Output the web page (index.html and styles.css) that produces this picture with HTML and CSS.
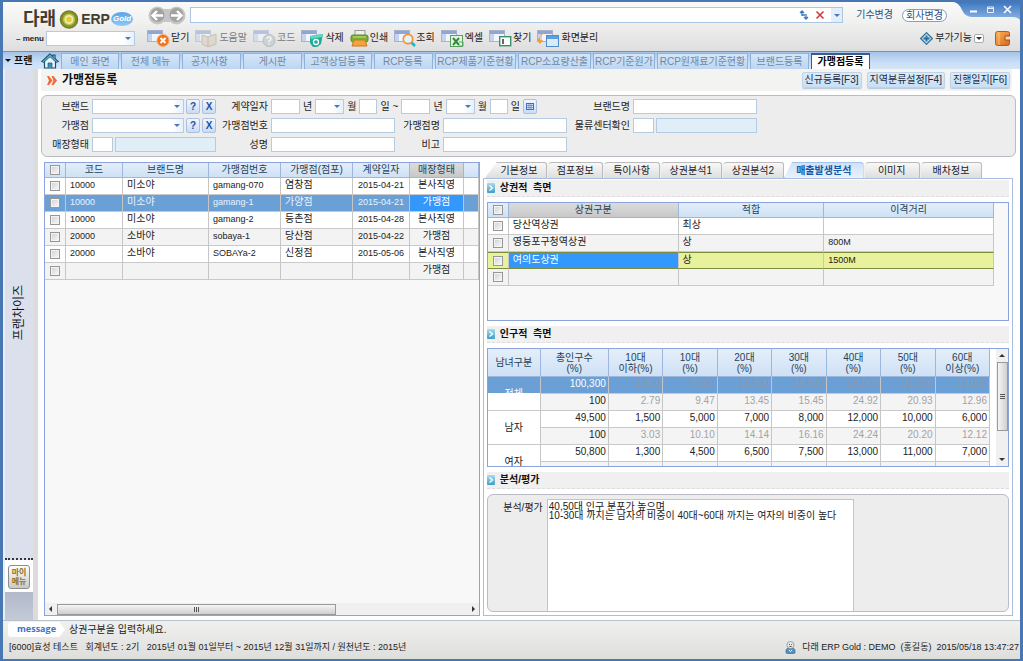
FILE: index.html
```html
<!DOCTYPE html>
<html lang="ko">
<head>
<meta charset="utf-8">
<title>다래 ERP Gold</title>
<link rel="stylesheet" href="styles.css">
</head>
<body>
<svg class="defs" width="0" height="0" aria-hidden="true">
  <defs>
    <linearGradient id="gBlue" x1="0" y1="0" x2="0" y2="1"><stop offset="0" stop-color="#3f78c0"/><stop offset="1" stop-color="#8bb5e6"/></linearGradient>
    <linearGradient id="gOrange" x1="0" y1="0" x2="1" y2="1"><stop offset="0" stop-color="#fbb659"/><stop offset="1" stop-color="#d8641a"/></linearGradient>
    <linearGradient id="gSection" x1="0" y1="0" x2="0" y2="1"><stop offset="0" stop-color="#a9dcec"/><stop offset="1" stop-color="#3f9dc4"/></linearGradient>
    <symbol id="win" viewBox="0 0 16 12"><rect x=".5" y=".5" width="15" height="11" fill="#f2f6fc" stroke="#a5b2d0"/><rect x="1" y="1" width="14" height="3" fill="#8ea5d6"/><rect x="1" y="4" width="4" height="7" fill="#c6d3ee"/></symbol>
    <symbol id="section" viewBox="0 0 8 10"><rect width="8" height="10" rx="1" fill="url(#gSection)"/><path d="M2.5 2.5 5.500 5 2.500 7.500" fill="none" stroke="#fff" stroke-width="1.300"/></symbol>
  </defs>
</svg>
<div class="window">
  <header class="header">
    <div class="brand">
      <div class="logo">
        <span class="logo-kr">다래</span>
        <svg width="20" height="19" viewBox="0 0 20 19"><circle cx="10" cy="9.500" r="9.300" fill="#6f7d22"/><circle cx="10" cy="9.500" r="8" fill="#8a8f2c"/><circle cx="10" cy="9.500" r="6" fill="#b4c64a"/><circle cx="10" cy="9.500" r="4.500" fill="#e9efae"/><circle cx="10" cy="9.500" r="2.700" fill="#f4c62e"/></svg>
        <span class="logo-erp">ERP</span>
        <span class="logo-gold">Gold</span>
      </div>
      <div class="menu-row"><label for="menu">– menu</label><span class="combo menu-combo"><select id="menu"><option></option></select></span></div>
    </div>
    <div class="tools">
      <div class="address-row">
        <svg class="nav" width="40" height="19" viewBox="0 0 40 19"><circle cx="10.500" cy="9.500" r="9" fill="#c6c6c6"/><circle cx="29.500" cy="9.500" r="9" fill="#c6c6c6"/><rect x="10" y="3" width="20" height="13" fill="#c6c6c6"/><circle cx="10.500" cy="9" r="7" fill="#a2a2a2"/><circle cx="29.500" cy="9" r="7" fill="#a2a2a2"/><path d="M16 9.500H6M10 5 5.500 9.500 10 14M24 9.500h10M30 5l4.500 4.500L30 14" stroke="#fff" stroke-width="2.400" fill="none"/></svg>
        <div class="address">
          <input aria-label="주소">
          <svg width="10" height="10" viewBox="0 0 10 10"><path d="M3 6V1M1 3l2-2 2 2M3 5h3M7 4v5M5 7l2 2 2-2" fill="none" stroke="#3a78c2" stroke-width="1.300"/></svg>
          <svg width="10" height="10" viewBox="0 0 10 10"><path d="M1.500 1.500l7 7M8.500 1.500l-7 7" stroke="#d63a36" stroke-width="1.600"/></svg>
          <button class="address-drop" aria-label="목록"></button>
        </div>
        <a href="#" class="term">기수변경</a>
        <button class="company">회사변경</button>
      </div>
      <div class="toolbar">
        <button><svg width="24" height="17" viewBox="0 0 24 17"><use href="#win" width="16" height="12"/><circle cx="16" cy="10.500" r="6" fill="#f0731d" stroke="#f7ac6b"/><path d="M13.500 8l5 5M18.500 8l-5 5" stroke="#fff" stroke-width="2"/></svg>닫기</button>
        <button class="off"><svg width="24" height="17" viewBox="0 0 24 17"><use href="#win" width="16" height="12"/><path d="M7 5l6 2 8-3v10l-8 3-6-3z" fill="#d8d0bd" stroke="#aba390"/><path d="M13 7v10" stroke="#a69c85"/></svg>도움말</button>
        <button class="off"><svg width="24" height="17" viewBox="0 0 24 17"><use href="#win" width="16" height="12"/><circle cx="16" cy="10.500" r="6" fill="#b5c4c9" stroke="#8c9ea5"/><path d="M14 9q0-2 2-2t2 2q0 1-2 2v1M16 13v1.500" fill="none" stroke="#fff" stroke-width="1.500"/></svg>코드</button>
        <button><svg width="24" height="17" viewBox="0 0 24 17"><use href="#win" width="16" height="12"/><path d="M9 6l13-2-2 10-4 3h-4l-3-4z" fill="#21ab98"/><path d="M9 6l13-2-1 3-11 2z" fill="#65d5c4"/><circle cx="15" cy="12" r="2.500" fill="none" stroke="#fff" stroke-width="1.300"/></svg>삭제</button>
        <button><svg width="20" height="17" viewBox="0 0 20 17"><rect x="5" y=".5" width="10" height="6" fill="#eee" stroke="#999"/><rect x="1" y="5" width="17" height="7" rx="2" fill="#7cad35" stroke="#5b8a20"/><path d="M3 7h13" stroke="#c4e084"/><path d="M4 10h11l2 6H2z" fill="#f1a33c" stroke="#c97b21"/></svg>인쇄</button>
        <button><svg width="22" height="17" viewBox="0 0 22 17"><use href="#win" width="16" height="12"/><path d="M17 12l4 4" stroke="#21b5c8" stroke-width="2.600"/><circle cx="14" cy="9" r="4.700" fill="#e5f2f6" stroke="#f0923a" stroke-width="1.700"/></svg>조회</button>
        <button><svg width="24" height="17" viewBox="0 0 24 17"><use href="#win" width="16" height="12"/><rect x="9.500" y="5.500" width="12" height="11" fill="#e9f5e4" stroke="#5b9e5b"/><path d="M12 8l6 7M18 8l-6 7" stroke="#2e8d3b" stroke-width="2"/><path d="M18 12h4v4h-4" fill="none" stroke="#55a665"/></svg>엑셀</button>
        <button><svg width="24" height="17" viewBox="0 0 24 17"><use href="#win" width="16" height="12"/><rect x="10.700" y="6.700" width="11" height="9" fill="#fff" stroke="#39906a" stroke-width="1.400"/><path d="M14 9v5" stroke="#333" stroke-width="1.500"/></svg>찾기</button>
        <button><svg width="24" height="17" viewBox="0 0 24 17"><use href="#win" width="16" height="12"/><path d="M8 2Q2 4 3 10h3l-3 4-3-4" fill="#f0a030"/><rect x="9.500" y="5.500" width="12" height="11" fill="#d9ebfb" stroke="#4f8dcd"/><rect x="10" y="6" width="11" height="3" fill="#5d9de0"/></svg>화면분리</button>
        <span class="grow"></span>
        <button class="extra"><svg width="13" height="13" viewBox="0 0 13 13"><path d="M6.500.7 12.300 6.500 6.500 12.300.7 6.500z" fill="#bedcee" stroke="#356e95" stroke-width="1.200"/><path d="M6.500 3.500v6M3.500 6.500h6" stroke="#2c6a98" stroke-width="1.800"/></svg>부가기능<span class="mini-drop"></span></button>
        <button class="exit" aria-label="나가기"><svg width="15" height="15" viewBox="0 0 15 15"><rect x=".5" y=".5" width="14" height="14" rx="2" fill="url(#gOrange)" stroke="#b9581b"/><path d="M15 5h-5v4h5" fill="#fbd9ae" stroke="#a64a12"/><path d="M4 1v13" stroke="#f9c98a" stroke-width=".8"/></svg></button>
      </div>
    </div>
    <div class="caption">
      <svg class="caption-bg" viewBox="0 0 66 18" preserveAspectRatio="none" aria-hidden="true"><path d="M0 0Q5 1 8 8T18 15H58Q64 15 66 18V0z" fill="url(#gBlue)"/></svg>
      <button aria-label="최소화"><svg width="9" height="9" viewBox="0 0 9 9"><path d="M1 6.500h7" stroke="#fff" stroke-width="2"/></svg></button>
      <button aria-label="최대화"><svg width="9" height="9" viewBox="0 0 9 9"><path d="M1.500 2h6v5.500h-6zM1.500 3.500h6" fill="none" stroke="#e8f1fb"/></svg></button>
      <button aria-label="닫기"><svg width="9" height="9" viewBox="0 0 9 9"><path d="M1 1l7 7M8 1 1 8" stroke="#fff" stroke-width="1.500"/></svg></button>
    </div>
  </header>

  <nav class="tabs">
    <button class="module">프랜</button>
    <button class="home" aria-label="홈"><svg width="18" height="16" viewBox="0 0 18 16"><path d="M9 1 1 8.500h2.500V15h11V8.500H17L14 5.700V2h-2v2z" fill="#e9f7fb" stroke="#1d4f6b" stroke-width="1.200"/><path d="M9 1 1 8.500l1.500 1L9 3.800l6.500 5.700 1.500-1z" fill="#4eb0cf" stroke="#1d4f6b" stroke-width=".8"/><path d="M7 15v-5h4v5" fill="#3f92b8" stroke="#1d4f6b" stroke-width=".7"/></svg></button>
    <a href="#" class="tab w58">메인 화면</a><a href="#" class="tab w59">전체 메뉴</a><a href="#" class="tab left w59">공지사항</a><a href="#" class="tab w59">게시판</a><a href="#" class="tab w68">고객상담등록</a><a href="#" class="tab left w59">RCP등록</a><a href="#" class="tab w81">RCP제품기준현황</a><a href="#" class="tab w73">RCP소요량산출</a><a href="#" class="tab w62">RCP기준원가</a><a href="#" class="tab w91">RCP원재료기준현황</a><a href="#" class="tab w59">브랜드등록</a><a href="#" class="tab current w59">가맹점등록</a>
  </nav>

  <div class="workspace">
    <aside class="sidebar">
      <div class="side-strip"><span class="side-name">프랜차이즈</span></div>
      <div class="my-menu"><button>마이<br>메뉴</button></div>
      <div class="side-end"></div>
    </aside>
    <main class="content">
      <div class="title-row">
        <svg width="10" height="9" viewBox="0 0 10 9"><path d="M0 0h2l3.500 4.500L2 9H0l2-4.500zM4.500 0h2L10 4.500 6.500 9h-2l2-4.500z" fill="#ee6a3c"/></svg>
        <h1>가맹점등록</h1>
        <button>신규등록[F3]</button><button>지역분류설정[F4]</button><button>진행일지[F6]</button>
      </div>

      <form class="search">
        <label for="brand">브랜드</label>
        <div class="fields"><span class="combo grow"><select id="brand"><option></option></select></span><button type="button" class="sq">?</button><button type="button" class="sq x">X</button></div>
        <label for="y1">계약일자</label>
        <div class="fields dates">
          <input id="y1" class="year"><span>년</span><span class="combo month"><select aria-label="시작 월"><option></option></select></span><span>월</span><input class="day" aria-label="시작 일"><span>일</span><span>~</span>
          <input class="year" aria-label="종료 년"><span>년</span><span class="combo month"><select aria-label="종료 월"><option></option></select></span><span>월</span><input class="day" aria-label="종료 일"><span>일</span>
          <button type="button" class="sq" aria-label="달력"><svg width="8" height="7" viewBox="0 0 8 7"><rect x=".5" y=".5" width="7" height="6" fill="#dce9fb" stroke="#3e6fc0"/><path d="M1 2.500h6M1 4.500h6M3 1v5M5 1v5" stroke="#5b87cf" stroke-width=".8"/></svg></button>
        </div>
        <label for="bname">브랜드명</label>
        <div class="fields"><input id="bname" class="grow"></div>

        <label for="shop">가맹점</label>
        <div class="fields"><span class="combo grow"><select id="shop"><option></option></select></span><button type="button" class="sq">?</button><button type="button" class="sq x">X</button></div>
        <label for="shopno">가맹점번호</label>
        <div class="fields"><input id="shopno" class="grow"></div>
        <label for="shopname">가맹점명</label>
        <div class="fields"><input id="shopname" class="grow"></div>
        <label for="center">물류센터확인</label>
        <div class="fields"><input id="center" class="code"><input class="grow locked" readonly aria-label="물류센터명"></div>

        <label for="kind">매장형태</label>
        <div class="fields"><input id="kind" class="code"><input class="grow locked" readonly aria-label="매장형태명"></div>
        <label for="person">성명</label>
        <div class="fields"><input id="person" class="grow"></div>
        <label for="note">비고</label>
        <div class="fields"><input id="note" class="grow"></div>
      </form>

      <div class="panes">
        <section class="list-pane">
          <table class="grid">
            <colgroup><col class="c21"><col class="c57"><col class="c86"><col class="c72"><col class="c72"><col class="c57"><col class="c54"><col></colgroup>
            <thead><tr><th><input type="checkbox" aria-label="전체 선택"></th><th>코드</th><th>브랜드명</th><th>가맹점번호</th><th>가맹점(점포)</th><th>계약일자</th><th class="sorted">매장형태</th><th></th></tr></thead>
            <tbody>
              <tr><td><input type="checkbox" aria-label="선택"></td><td class="latin">10000</td><td>미소야</td><td class="latin">gamang-070</td><td>염창점</td><td class="mid latin">2015-04-21</td><td class="mid">본사직영</td><td></td></tr>
              <tr class="selected"><td><input type="checkbox" aria-label="선택"></td><td class="latin">10000</td><td>미소야</td><td class="latin">gamang-1</td><td>가양점</td><td class="mid latin">2015-04-21</td><td class="mid focus">가맹점</td><td></td></tr>
              <tr><td><input type="checkbox" aria-label="선택"></td><td class="latin">10000</td><td>미소야</td><td class="latin">gamang-2</td><td>등촌점</td><td class="mid latin">2015-04-28</td><td class="mid">본사직영</td><td></td></tr>
              <tr class="alt"><td><input type="checkbox" aria-label="선택"></td><td class="latin">20000</td><td>소바야</td><td class="latin">sobaya-1</td><td>당산점</td><td class="mid latin">2015-04-22</td><td class="mid">가맹점</td><td></td></tr>
              <tr><td><input type="checkbox" aria-label="선택"></td><td class="latin">20000</td><td>소바야</td><td class="latin">SOBAYa-2</td><td>신정점</td><td class="mid latin">2015-05-06</td><td class="mid">본사직영</td><td></td></tr>
              <tr class="alt"><td><input type="checkbox" aria-label="선택"></td><td></td><td></td><td></td><td></td><td></td><td class="mid">가맹점</td><td></td></tr>
            </tbody>
          </table>
          <div class="hscroll"><i class="arrow l"></i><div class="track"><div class="thumb"><i class="grip"></i></div></div><i class="arrow r"></i></div>
        </section>

        <section class="detail">
          <div class="detail-tabs">
            <a href="#" class="first">기본정보</a><a href="#">점포정보</a><a href="#">특이사항</a><a href="#" class="wide">상권분석1</a><a href="#" class="wide">상권분석2</a><a href="#" class="on">매출발생분석</a><a href="#">이미지</a><a href="#" class="wide">배차정보</a>
          </div>
          <div class="detail-body">
            <h2><svg width="8" height="10"><use href="#section"/></svg>상권적&nbsp; 측면</h2>
            <div class="box area-box">
              <table class="grid area">
                <colgroup><col class="c21"><col class="third"><col class="narrow"><col class="third"></colgroup>
                <thead><tr><th><input type="checkbox" aria-label="전체 선택"></th><th class="sorted">상권구분</th><th>적합</th><th>이격거리</th></tr></thead>
                <tbody>
                  <tr><td><input type="checkbox" aria-label="선택"></td><td>당산역상권</td><td>최상</td><td></td></tr>
                  <tr class="alt"><td><input type="checkbox" aria-label="선택"></td><td>영등포구청역상권</td><td>상</td><td class="latin">800M</td></tr>
                  <tr class="lime"><td><input type="checkbox" aria-label="선택"></td><td class="focus">여의도상권</td><td>상</td><td class="latin">1500M</td></tr>
                  <tr class="alt"><td><input type="checkbox" aria-label="선택"></td><td></td><td></td><td></td></tr>
                </tbody>
              </table>
            </div>

            <h2><svg width="8" height="10"><use href="#section"/></svg>인구적&nbsp; 측면</h2>
            <div class="box people-box">
              <div class="people-view">
              <table class="grid people">
                <colgroup><col class="sex"><col class="total"><col span="7"></colgroup>
                <thead><tr><th>남녀구분</th><th>총인구수<br>(%)</th><th>10대<br>이하(%)</th><th>10대<br>(%)</th><th>20대<br>(%)</th><th>30대<br>(%)</th><th>40대<br>(%)</th><th>50대<br>(%)</th><th>60대<br>이상(%)</th></tr></thead>
                <tbody>
                  <tr class="selected"><td rowspan="2" class="sexcell split">전체</td><td>100,300</td><td>2,800</td><td>9,500</td><td>13,500</td><td>15,500</td><td>25,000</td><td>21,000</td><td>13,000</td></tr>
                  <tr class="pct"><td>100</td><td>2.79</td><td>9.47</td><td>13.45</td><td>15.45</td><td>24.92</td><td>20.93</td><td>12.96</td></tr>
                  <tr><td rowspan="2" class="sexcell">남자</td><td>49,500</td><td>1,500</td><td>5,000</td><td>7,000</td><td>8,000</td><td>12,000</td><td>10,000</td><td>6,000</td></tr>
                  <tr class="pct"><td>100</td><td>3.03</td><td>10.10</td><td>14.14</td><td>16.16</td><td>24.24</td><td>20.20</td><td>12.12</td></tr>
                  <tr><td rowspan="2" class="sexcell">여자</td><td>50,800</td><td>1,300</td><td>4,500</td><td>6,500</td><td>7,500</td><td>13,000</td><td>11,000</td><td>7,000</td></tr>
                  <tr class="pct"><td></td><td></td><td></td><td></td><td></td><td></td><td></td><td></td></tr>
                </tbody>
              </table>
              </div>
              <div class="vscroll"><i class="arrow u"></i><div class="vtrack"><div class="vthumb"><i class="vgrip"></i></div></div><i class="arrow d"></i></div>
            </div>

            <h2><svg width="8" height="10"><use href="#section"/></svg>분석/평가</h2>
            <div class="review"><label for="review">분석/평가</label><textarea id="review" spellcheck="false">40,50대 인구 분포가 높으며
10-30대 까지는 남자의 비중이 40대~60대 까지는 여자의 비중이 높다</textarea></div>
          </div>
        </section>
      </div>
    </main>
  </div>

  <footer class="footer">
    <div class="message"><span class="pill">message</span><span>상권구분을 입력하세요.</span></div>
    <div class="status">
      <span class="pre">[6000]효성 테스트   회계년도 : 2기   2015년 01월 01일부터 ~ 2015년 12월 31일까지 / 원천년도 : 2015년</span>
      <span class="grow"></span>
      <svg width="11" height="13" viewBox="0 0 11 13"><path d="M1 12V9q0-2 4.500-2T10 9v3q-4.500 2-9 0z" fill="#5793bd" stroke="#3b6f95" stroke-width=".7"/><circle cx="5.500" cy="4" r="3.600" fill="#e2e7e9" stroke="#7f8b90" stroke-width=".7"/><path d="M4 3.500h.8M6.300 3.500h.8M4.500 5.500h2" stroke="#444"/><path d="M4 9l1.500 1.500L7 9" fill="none" stroke="#fff"/></svg>
      <span class="pre">다래 ERP Gold : DEMO  (홍길동)  2015/05/18 13:47:27</span>
    </div>
  </footer>
</div>
</body>
</html>
```
FILE: styles.css
```css
* { box-sizing: border-box; }
body {
  margin: 0;
  color: #222;
  font: 10px/14px "Liberation Sans", "Noto Sans CJK KR", sans-serif;
}
button, input, select, textarea { font: inherit; color: inherit; margin: 0; padding: 0; border-radius: 0; }
button { border: 0; background: none; white-space: nowrap; }
a { color: inherit; text-decoration: none; white-space: nowrap; }
svg { display: block; flex: none; }
h1, h2 { margin: 0; }
.defs { position: absolute; }
.grow { flex: 1; min-width: 0; }
.pre { white-space: pre; }

.window {
  min-height: 100vh;
  display: flex;
  flex-direction: column;
  border: 3px solid #4878b4;
  border-width: 2px 3px;
  background: #fff;
}

/* header */
.header {
  position: relative;
  display: flex;
  gap: 12px;
  height: 50px;
  padding: 3px 5px 0 13px;
  border-bottom: 1px solid #7690b0;
  background: linear-gradient(#fafafa, #f1f1f0 40%, #dedede);
}
.brand { flex: none; width: 119px; }
.logo { display: flex; align-items: center; height: 26px; padding: 2px 0 0 7px; color: #443c2c; font-weight: bold; white-space: nowrap; }
.logo-kr { font-size: 18px; line-height: 20px; margin-right: 3px; }
.logo-erp { font-size: 14px; margin-left: 2px; }
.logo-gold {
  margin-left: 1px;
  padding: 0 2px;
  border-radius: 50%;
  background: linear-gradient(#5ca4e8, #8cc8fa);
  color: #fff;
  font-size: 8px;
  font-style: italic;
  line-height: 14px;
}
.menu-row { display: flex; align-items: center; justify-content: space-between; font-weight: bold; white-space: nowrap; }
.menu-row label { font-size: 8px; }
.menu-combo { width: 89px; }

.tools { flex: 1; min-width: 0; }
.address-row { display: flex; align-items: center; height: 20px; padding-right: 68px; }
.nav { margin-right: 3px; }
.address { flex: 1; display: flex; align-items: center; gap: 6px; height: 16px; border: 1px solid #a9c6e4; background: #fff; }
.address input { flex: 1; min-width: 0; border: 0; background: none; outline: 0; }
.address-drop { width: 11px; height: 14px; background: #e3eefa; display: grid; place-items: center; }
.address-drop::after, .combo::after, .mini-drop::after, .module::before {
  content: "";
  border: 3px solid transparent;
  border-top-color: #4a78ae;
  border-bottom-width: 0;
}
.term { margin: 0 9px 0 13px; color: #2c5186; }
.company { width: 45px; height: 13px; line-height: 11px; border: 1px solid #7d9fcb; border-radius: 7px; background: #fff; color: #2c5186; }
.toolbar { display: flex; align-items: center; gap: 6px; height: 22px; margin-top: 2px; padding-right: 5px; }
.toolbar button { display: flex; align-items: center; }
.toolbar .off { opacity: .55; }
.toolbar .extra { gap: 2px; margin-right: 5px; }
.mini-drop { display: grid; place-items: center; width: 10px; height: 9px; border: 1px solid #aaa; border-radius: 2px; background: #fff; }
.mini-drop::after { border-top-color: #333; }

.caption { position: absolute; top: 0; right: 0; width: 66px; height: 18px; display: flex; gap: 8px; justify-content: flex-end; padding: 2px 8px 0 0; }
.caption-bg { position: absolute; inset: 0; width: 100%; height: 100%; }
.caption button { position: relative; height: 11px; }

/* combo boxes */
.combo { position: relative; display: block; height: 15px; border: 1px solid #b4cbe2; background: #fff; }
.combo select { appearance: none; width: 100%; height: 100%; border: 0; background: linear-gradient(90deg, transparent, #e6f0fb) right / 11px 100% no-repeat; display: block; }
.combo::after { position: absolute; right: 3px; top: 5px; pointer-events: none; }

/* top tabs */
.tabs { display: flex; align-items: stretch; gap: 2px; height: 17px; padding-left: 2px; background: linear-gradient(#a5c3e8, #c9def6 60%, #d5e5f7); }
.module { display: flex; align-items: center; gap: 3px; width: 34px; color: #111; font-size: 10px; font-weight: bold; }
.module::before { border-top-color: #111; }
.home { width: 18px; }
.tab {
  overflow: hidden;
  margin-top: 1px;
  border: 1px solid #8fb2d8;
  border-bottom: 0;
  background: linear-gradient(#d5e6f8, #bcd6f2);
  color: #7088a4;
  line-height: 15px;
  text-align: center;
}
.tab.left { padding-left: 8px; text-align: left; }
.tab.current { border-color: #3f5c88; border-top-width: 2px; background: #fff; color: #000; font-weight: bold; line-height: 14px; }
.w58 { width: 58px; } .w59 { width: 59px; } .w62 { width: 62px; } .w68 { width: 68px; }
.w73 { width: 73px; } .w81 { width: 81px; } .w91 { width: 91px; }

/* sidebar */
.workspace { flex: 1; display: flex; }
.sidebar { flex: none; display: flex; flex-direction: column; width: 35px; padding-left: 2px; border-right: 5px solid #dcdcdc; background: #e9eef6; }
.side-strip { flex: 1; display: flex; justify-content: center; align-items: center; padding-bottom: 2px; border-bottom: 2px dotted #333; background: #dce0ec; }
.side-name { writing-mode: vertical-rl; text-orientation: sideways; transform: rotate(180deg); color: #111; font-size: 12px; }
.my-menu { padding: 5px 3px 3px; background: #fff; }
.my-menu button { width: 100%; height: 24px; border: 1px solid #8d8d8d; border-radius: 3px; background: linear-gradient(#fdfdfd, #c9c9c9); color: #8f7016; font-size: 8px; font-weight: bold; line-height: 9px; }
.side-end { height: 28px; background: linear-gradient(#b2b9c8, #c3cad8); }

/* content */
.content { flex: 1; min-width: 0; display: flex; flex-direction: column; padding: 0 4px 4px 3px; }
.title-row { display: flex; align-items: center; gap: 5px; height: 22px; margin-right: 4px; padding: 0 2px 0 6px; background: #f3f3f2; }
.title-row h1 { flex: 1; color: #111; font-size: 12px; }
.title-row button { height: 16px; padding: 0 2px; border: 1px solid #bdd3ea; border-radius: 2px; background: linear-gradient(#dcebfa, #c8dff5); box-shadow: 0 1px 1px #b9c9da; color: #1b2c42; line-height: 14px; }

.search {
  display: grid;
  grid-template-columns: 46px 124px 49px 124px 42px 124px 60px 124px;
  gap: 4px 3px;
  margin-top: 4px;
  padding: 3px 0 4px 1px;
  border: 1px solid #b9bcc4;
  border-radius: 6px;
  background: #ededed;
}
.search label { line-height: 15px; text-align: right; white-space: nowrap; }
.fields { display: flex; align-items: center; gap: 2px; height: 15px; }
.search input { height: 15px; min-width: 0; border: 1px solid #b4cbe2; background: #fff; }
.search input.locked { background: #e0eef8; }
.search input.code { width: 21px; }
.dates { grid-column: span 3; gap: 3px; }
.search .year { width: 29px; }
.search .day { width: 18px; }
.month { width: 29px; }
.sq { display: grid; place-items: center; width: 14px; height: 15px; border: 1px solid #a9c1e6; border-radius: 2px; background: linear-gradient(#f1f7fe, #c9dcf6); color: #28509c; font-weight: bold; line-height: 12px; }

.panes { flex: 1; display: flex; gap: 3px; padding: 5px 3px 0 3px; }
.list-pane { flex: 45 1 0; min-width: 0; display: flex; flex-direction: column; justify-content: space-between; border: 1px solid #8ba5dc; background: #f8f8f8; }

/* data tables */
.grid { width: 100%; table-layout: fixed; border-collapse: separate; border-spacing: 0; background: #fff; color: #222; white-space: nowrap; }
.grid th, .grid td { height: 17px; padding: 0 4px; overflow: hidden; border-right: 1px solid #c6c6c6; border-bottom: 1px solid #c9c9c9; line-height: 14px; }
.grid th { height: 15px; padding: 0; border-right-color: #9db6dc; border-bottom-color: #9db6dc; background: linear-gradient(#e4eefa, #cfe1f5); color: #1e4258; font-weight: normal; text-align: center; }
.grid th.sorted { background: linear-gradient(#dcdcdc, #c8c8c8); }
.grid td { vertical-align: top; }
.grid .latin { font-size: 9px; }
.grid .mid { padding: 0; text-align: center; }
.grid .alt td { background: #f3f3f3; }
.grid .selected td { background: #6ba0d6; color: #e9f3fd; }
.grid tr td.focus, .grid .selected td.focus { background: #3397fb; color: #fff; }
.grid .lime td { border-top: 1px solid #7f8c3e; border-bottom-color: #7f8c3e; background: #e8f29c; }
.grid input[type="checkbox"] { appearance: none; display: block; width: 10px; height: 10px; margin: 0 auto; border: 1px solid #979797; background: linear-gradient(135deg, #cfd0d0, #fafafa); box-shadow: inset 0 0 0 1px #f4f4f4; }
.grid td:has(input) { padding: 0; vertical-align: middle; }
.c21 { width: 21px; } .c54 { width: 54px; } .c57 { width: 57px; } .c72 { width: 72px; } .c86 { width: 86px; }
.third { width: 35%; } .narrow { width: 30%; }

/* scroll bars */
.arrow { flex: none; border: 3px solid transparent; }
.arrow.l { border-right-color: #333; border-left: 0; }
.arrow.r { border-left-color: #333; border-right: 0; }
.arrow.u { border-bottom-color: #333; border-top: 0; }
.arrow.d { border-top-color: #333; border-bottom: 0; }
.hscroll { display: flex; align-items: center; gap: 5px; height: 12px; padding: 0 4px; background: #f0f0f0; }
.track { flex: 1; }
.thumb { width: 68%; height: 11px; display: grid; place-items: center; border: 1px solid #9a9a9a; background: linear-gradient(#f5f5f5, #cfcfcf); }
.grip { width: 5px; height: 5px; background: repeating-linear-gradient(90deg, #555 0 1px, transparent 1px 2px); }
.vscroll { display: flex; flex-direction: column; align-items: center; gap: 5px; width: 12px; padding: 5px 0; background: #f0f0f0; }
.vtrack { flex: 1; }
.vthumb { width: 11px; height: 76%; display: grid; place-items: center; border: 1px solid #9a9a9a; background: linear-gradient(90deg, #f5f5f5, #cfcfcf); }
.vgrip { width: 5px; height: 5px; background: repeating-linear-gradient(#555 0 1px, transparent 1px 2px); }

/* detail pane */
.detail { flex: 55 1 0; min-width: 0; display: flex; flex-direction: column; }
.detail-tabs { display: flex; height: 16px; padding: 0 31px 0 2px; }
.detail-tabs a { flex: 56 1 0; border: 1px solid #bbb; border-bottom: 0; border-left-color: #eee; border-radius: 5px 3px 0 0; background: linear-gradient(#f8f8f8, #dedede); line-height: 15px; text-align: center; }
.detail-tabs a.first { flex-grow: 56; padding-left: 6px; clip-path: polygon(12px 0, 100% 0, 100% 100%, 0 100%); }
.detail-tabs a.wide { flex-grow: 62; }
.detail-tabs a.on { flex-grow: 80; border-color: #a5c3e8; background: linear-gradient(#d0e2f8, #e9f2fd); clip-path: polygon(8px 0, 100% 0, 100% 100%, 0 100%); color: #1258a4; font-weight: bold; }
.detail-body { flex: 1; display: flex; flex-direction: column; padding: 1px 3px 3px; border: 1px solid #a9bde2; background: #fff; }
.detail-body h2 { display: flex; align-items: center; gap: 5px; height: 17px; border-bottom: 1px dashed #ddd; background: #f0f0f0; color: #111; font-size: 10px; line-height: 16px; }
.box { margin: 5px 0; border: 1px solid #8ba5dc; background: #f8f8f8; }
.area-box { height: 119px; padding-right: 14px; }
.people-box { display: flex; justify-content: space-between; height: 119px; overflow: hidden; background: #fff; }
.people-view { flex: 1; overflow: hidden; margin-right: 6px; }
.sex { width: 53px; } .total { width: 68px; }
.people th { height: 28px; line-height: 11px; }
.people td { padding: 0 2px; text-align: right; }
.people td.sexcell { vertical-align: middle; text-align: center; background: #fff; }
.people .selected td { color: #8a99ac; }
.people .selected td:nth-child(2) { color: #fff; }
.people .selected td.split { background: linear-gradient(#6ba0d6 50%, #fff 50%); color: #fff; }
.people .pct td { background: #f4f4f4; color: #a3a3a3; }
.people .pct td:first-child { color: #222; }
.review { flex: 1; display: flex; gap: 4px; margin-top: 5px; padding-top: 4px; border: 1px solid #b9bcc4; border-radius: 6px; background: #ededed; }
.review label { width: 55px; padding-top: 2px; text-align: right; }
.review textarea { width: 59%; padding: 2px 1px 0; border: 1px solid #b4c6e0; border-bottom: 0; background: #fff; line-height: 9px; resize: none; outline: 0; overflow: hidden; }

/* footer */
.footer { padding: 0 1px 3px 5px; border-top: 1px solid #b8c0cc; background: linear-gradient(#f0f0ee, #dededc); }
.message { display: flex; align-items: center; gap: 4px; height: 17px; }
.pill { width: 57px; height: 15px; border-radius: 3px; background: #fff; clip-path: polygon(0 0, 90% 0, 100% 50%, 90% 100%, 0 100%); color: #3a74c4; font: bold 9px/14px "Open Sans", sans-serif; text-align: center; }
.status { display: flex; align-items: center; gap: 6px; height: 18px; padding-left: 1px; font-size: 9px; }
```
